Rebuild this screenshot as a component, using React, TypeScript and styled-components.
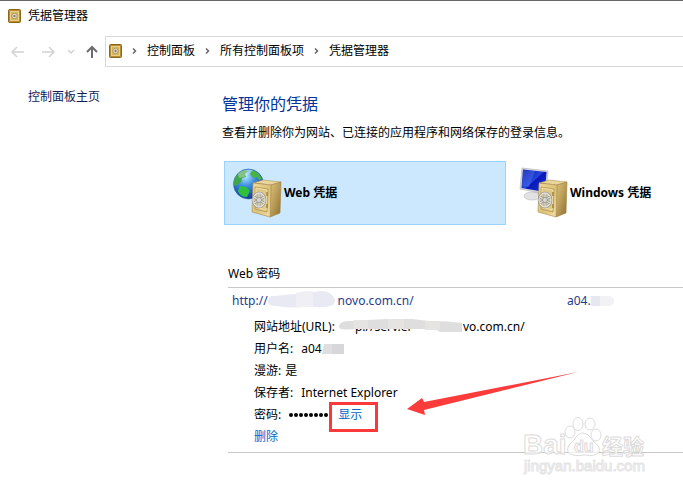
import React from "react";
import styled, { createGlobalStyle, css } from "styled-components";

const GlobalStyle = createGlobalStyle`
  * { box-sizing: border-box; }
  body {
    margin: 0;
    background: #fff;
    color: #000;
    font: 12px/20px "Noto Sans", "Open Sans", "Noto Sans CJK SC", sans-serif;
  }
  button { font: inherit; padding: 0; border: 0; background: none; cursor: pointer; }
`;

const Window = styled.div`
  position: relative;
  min-height: 100vh;
  overflow: hidden;
  border-top: 1px solid #6b6668;
  white-space: nowrap;
`;

const TitleBar = styled.header`
  display: flex;
  align-items: center;
  gap: 7px;
  height: 29px;
  padding-left: 8px;
`;

const WindowTitle = styled.span``;

const NavBar = styled.nav`
  display: flex;
  align-items: center;
  margin-top: 6px;
`;

const NavButtons = styled.div`
  display: grid;
  grid-template-columns: 36px 24px 22px 20px;
  justify-items: center;
  flex: none;
  padding-right: 3px;
`;

const NavButton = styled.button<{ $active?: boolean }>`
  display: flex;
  align-items: center;
  justify-content: center;
  height: 20px;
  color: ${(p) => (p.$active ? "#6c6c6c" : "#d2d2d2")};
`;

const AddressBar = styled.div`
  display: flex;
  align-items: center;
  flex: 1;
  height: 31px;
  padding: 0 0 2px 3px;
  border: 1px solid #d9d9d9;
  border-right: 0;
`;

const Crumb = styled.a`
  color: #000;
  text-decoration: none;
`;

const Separator = styled.span`
  display: flex;
  justify-content: center;
  width: 25px;
`;

const Body = styled.div`
  display: grid;
  grid-template-columns: 222px minmax(0, 1fr);
`;

const Sidebar = styled.aside`
  padding: 20px 0 0 28px;
`;

const HomeLink = styled.a`
  color: #151c55;
  text-decoration: none;
`;

const Main = styled.main`
  padding-top: 25px;
`;

const Heading = styled.h1`
  margin: 0;
  color: #003399;
  font-size: 16px;
  font-weight: 400;
  line-height: 24px;
`;

const Description = styled.p`
  margin: 7px 0 0;
`;

const Vaults = styled.div`
  display: flex;
  gap: 4px;
  margin: 18px 0 0 2px;
`;

const Vault = styled.button<{ $selected?: boolean }>`
  display: flex;
  align-items: center;
  gap: 2px;
  height: 64px;
  padding-left: 8px;
  color: #000;
  font-weight: 700;
  ${(p) =>
    p.$selected
      ? css`
          flex: 0 1 282px;
          border: 1px solid #99d1ff;
          background: #cce8ff;
        `
      : css`
          flex: 1;
          border: 1px solid transparent;
        `}
`;

const Section = styled.section`
  margin: 39px 0 0 6px;
  padding-bottom: 4px;
  border-bottom: 1px solid #c8c8c8;
`;

const SectionTitle = styled.h2`
  margin: 0;
  padding-bottom: 3px;
  border-bottom: 1px solid #c8c8c8;
  font-size: 12px;
  font-weight: 400;
  line-height: 20px;
`;

const RecordHeader = styled.div`
  display: grid;
  grid-template-columns: 335px 1fr;
  align-items: center;
  height: 26px;
  padding-left: 4px;
  color: #1f3c8c;
`;

const Details = styled.dl`
  margin: 2px 0 0 26px;
`;

const Detail = styled.div<{ $gap?: number }>`
  display: flex;
  align-items: center;
  gap: ${(p) => p.$gap ?? 8}px;
  height: 22px;
`;

const Label = styled.dt``;

const Value = styled.dd`
  display: flex;
  align-items: center;
  margin: 0;
`;

const Redacted = styled.span<{ $width: number }>`
  position: relative;
  display: inline-block;
  width: ${(p) => p.$width}px;
  height: 20px;
  padding-left: 16px;
  vertical-align: top;
`;

const Smudge = styled.svg`
  position: absolute;
  left: 0;
  top: 0;
  overflow: visible;
`;

const Dots = styled.span`
  display: flex;
  gap: 1px;
  margin-right: 10px;
`;

const Dot = styled.i`
  width: 4px;
  height: 4px;
  border-radius: 50%;
  background: #000;
`;

const Action = styled.button<{ $marked?: boolean }>`
  position: relative;
  color: #0066cc;
  ${(p) =>
    p.$marked &&
    css`
      &::after {
        content: "";
        position: absolute;
        inset: -3px -16px -7px -9px;
        border: 3px solid #fa3a3a;
      }
    `}
`;

const Arrow = styled.svg`
  position: absolute;
  left: 407px;
  top: 369px;
`;

const Watermark = styled.svg`
  position: absolute;
  left: 520px;
  top: 410px;
`;

function SafeIcon() {
  return (
    <svg width="13" height="14" viewBox="0 0 13 14" aria-hidden="true">
      <rect x=".5" y=".5" width="12" height="13" rx="1" fill="#b78d31" stroke="#8b671d" />
      <rect x="2.5" y="2.5" width="8" height="9" fill="#d6b562" stroke="#e8cf89" />
      <circle cx="6.5" cy="7" r="2.700" fill="#eee4c5" stroke="#a08a50" strokeWidth=".8" />
      <circle cx="6.5" cy="7" r="1.2" fill="#85806f" />
    </svg>
  );
}

function Chevron() {
  return (
    <Separator>
      <svg width="5" height="8" viewBox="0 0 5 8" fill="none" stroke="#666" strokeWidth="1.5" aria-hidden="true">
        <path d="m1 1.5 2.5 2.5L1 6.5" />
      </svg>
    </Separator>
  );
}

function NavArrow({ d, width = 14, heavy }: { d: string; width?: number; heavy?: boolean }) {
  return (
    <svg width={width} height="14" viewBox={`0 0 ${width} 14`} fill="none" stroke="currentColor" strokeWidth={heavy ? 2 : 1.5} aria-hidden="true">
      <path d={d} />
    </svg>
  );
}

function VaultIcon({ kind }: { kind: "web" | "windows" }) {
  return (
    <svg width="49" height="52" viewBox="0 0 49 52" aria-hidden="true">
      <defs>
        <radialGradient id="ocean" cx=".4" cy=".25" r=".8">
          <stop stopColor="#b5e8ff" />
          <stop offset=".4" stopColor="#3c8ee0" />
          <stop offset="1" stopColor="#0b2f8f" />
        </radialGradient>
        <linearGradient id="screen" x2="1" y2="1">
          <stop stopColor="#0717aa" />
          <stop offset=".48" stopColor="#2444dc" />
          <stop offset=".52" stopColor="#0a18bb" />
          <stop offset="1" stopColor="#1636d8" />
        </linearGradient>
        <linearGradient id="door" x2="1" y2="1">
          <stop stopColor="#efdb9c" />
          <stop offset=".55" stopColor="#dcc077" />
          <stop offset="1" stopColor="#f2e2a8" />
        </linearGradient>
        <linearGradient id="side" x2="1" y2="1">
          <stop stopColor="#dfc57c" />
          <stop offset="1" stopColor="#8f7030" />
        </linearGradient>
      </defs>
      {kind === "web" ? (
        <g>
          <circle cx="15.500" cy="17" r="15" fill="url(#ocean)" stroke="#2c67a6" strokeWidth=".6" />
          <path d="M2 11Q6 4 12 3l3 1-3 3 1 3-4 1-1 4-4 3-3 1Q0 15 2 11Z" fill="#3fa545" />
          <path d="m19 3 6 3 4 6-3 1-2-3-4 1-3-4Z" fill="#48b441" />
          <path d="m7 19 6 1 4 4-3 6Q7 30 5 24Z" fill="#2fc13b" />
          <path d="M5 7Q10 2 20 3q-5 7-14 8Z" fill="#fff" opacity=".35" />
        </g>
      ) : (
        <g>
          <path d="m13 25 10-1 3 6-7 2Z" fill="#c8cace" />
          <ellipse cx="13" cy="29" rx="8" ry="4" fill="#e2e2e5" stroke="#b7b8bc" strokeWidth=".6" />
          <path d="m3 1 26 3-2 23L1 22Z" fill="#d5d5dc" stroke="#babac0" strokeWidth=".7" />
          <path d="m4 2.500 23.500 2.500-1.500 20L2.500 21Z" fill="url(#screen)" />
          <path d="m4 3 12 1-6 16-7-1Z" fill="#6b8ff0" opacity=".3" />
        </g>
      )}
      <path d="m20 16 10-3 18 2-10 3Z" fill="#ead69b" stroke="#a68748" strokeWidth=".5" />
      <path d="m38 18 10-3-1 31-10 4Z" fill="url(#side)" stroke="#a08040" strokeWidth=".6" />
      <path d="m20 16 18 2-1 32-18-5Z" fill="url(#door)" stroke="#a9894a" strokeWidth=".6" />
      <path d="m22 20 13 2-1 23-12-3Z" fill="#dfc784" stroke="#ae8f4d" strokeWidth=".7" />
      <path d="m23 21 11 2-1 20-10-3Z" fill="none" stroke="#f5e6b5" strokeWidth=".7" />
      <path d="M34 25v4m0 8v4" stroke="#9e8142" strokeWidth="1.500" />
      <ellipse cx="26" cy="33" rx="6" ry="7" fill="none" stroke="#91928c" strokeWidth="2.500" />
      <ellipse cx="26" cy="33" rx="6" ry="7" fill="#d0c39b" stroke="#e0e0dc" strokeWidth="1.300" />
      <path d="M26 27v12m-5-9 10 6m-10 0 10-6" stroke="#91928c" strokeWidth="2.500" />
      <path d="M26 27v12m-5-9 10 6m-10 0 10-6" stroke="#e5e5df" strokeWidth="1.300" />
      <circle cx="26" cy="33" r="2.500" fill="#d8d8d4" stroke="#8a8b84" strokeWidth=".7" />
    </svg>
  );
}

export default function App() {
  return (
    <>
      <GlobalStyle />
      <Window>
        <TitleBar>
          <SafeIcon />
          <WindowTitle>凭据管理器</WindowTitle>
        </TitleBar>
        <NavBar aria-label="导航">
          <NavButtons>
            <NavButton aria-label="后退"><NavArrow d="M13 7H1m5-5L1 7l5 5" /></NavButton>
            <NavButton aria-label="前进"><NavArrow d="M1 7h12M8 2l5 5-5 5" /></NavButton>
            <NavButton aria-label="历史记录"><NavArrow width={8} d="m1 5 3 3 3-3" /></NavButton>
            <NavButton $active aria-label="向上"><NavArrow heavy d="M7 13V2M2 7l5-5 5 5" /></NavButton>
          </NavButtons>
          <AddressBar>
            <SafeIcon />
            <Chevron />
            <Crumb href="#panel">控制面板</Crumb>
            <Chevron />
            <Crumb href="#items">所有控制面板项</Crumb>
            <Chevron />
            <Crumb href="#manager">凭据管理器</Crumb>
          </AddressBar>
        </NavBar>
        <Body>
          <Sidebar>
            <HomeLink href="#home">控制面板主页</HomeLink>
          </Sidebar>
          <Main>
            <Heading>管理你的凭据</Heading>
            <Description>查看并删除你为网站、已连接的应用程序和网络保存的登录信息。</Description>
            <Vaults>
              <Vault $selected aria-pressed="true"><VaultIcon kind="web" />Web 凭据</Vault>
              <Vault aria-pressed="false"><VaultIcon kind="windows" />Windows 凭据</Vault>
            </Vaults>
            <Section>
              <SectionTitle>Web 密码</SectionTitle>
              <RecordHeader>
                <span>
                  http://
                  <Redacted $width={70}>
                    <Smudge width="70" height="20" aria-hidden="true">
                      <path d="M0 10q1-6 7-5 8-1 20-2 8-4 19-2 13-3 19 4 4 4 0 9-11 4-23 1-18 3-33 0-10 0-9-5Z" fill="#e8e9f3" />
                      <path d="M28 2q10-3 17 0v14H28Z" fill="#efeff5" />
                    </Smudge>
                  </Redacted>
                  novo.com.cn/
                </span>
                <span>
                  a04.
                  <Redacted $width={26}>
                    <Smudge width="26" height="20" aria-hidden="true">
                      <path d="M0 5h17q6 1 6 5t-6 5H0Z" fill="#e7e7f1" />
                      <path d="M9 5h8q6 1 6 5t-6 5H9Z" fill="#f1f1f6" />
                    </Smudge>
                  </Redacted>
                </span>
              </RecordHeader>
              <Details>
                <Detail $gap={4}>
                  <Label>网站地址(URL):</Label>
                  <Value>
                    <Redacted $width={124}>
                      p://serv.er
                      <Smudge width="124" height="20" aria-hidden="true">
                        <path d="M0 9q1-5 10-5l38-2h25l17 2q20 0 33 2v9h-22l-5-3H14q-15 2-14-3Z" fill="#dedede" />
                        <path d="M15 3h14v9H15Zm34-1h16v10H49Zm37 2h15v9H86Z" fill="#e6e3e3" />
                      </Smudge>
                    </Redacted>
                    vo.com.cn/
                  </Value>
                </Detail>
                <Detail>
                  <Label>用户名:</Label>
                  <Value>
                    a04
                    <Redacted $width={22}>
                      <Smudge width="22" height="20" aria-hidden="true">
                        <path d="M2 5h20v10H0Z" fill="#dedede" />
                        <path d="M10 5h12v10H10Z" fill="#d7d7d9" />
                      </Smudge>
                    </Redacted>
                  </Value>
                </Detail>
                <Detail $gap={4}><Label>漫游:</Label><Value>是</Value></Detail>
                <Detail><Label>保存者:</Label><Value>Internet Explorer</Value></Detail>
                <Detail>
                  <Label>密码:</Label>
                  <Value>
                    <Dots role="img" aria-label="已隐藏的密码">
                      {Array.from({ length: 8 }, (_, i) => <Dot key={i} />)}
                    </Dots>
                    <Action $marked>显示</Action>
                  </Value>
                </Detail>
                <Detail as="div"><Action>删除</Action></Detail>
              </Details>
            </Section>
          </Main>
        </Body>
        <Arrow width="174" height="46" viewBox="0 0 174 46" aria-hidden="true">
          <path d="m0 39 15-11 2 4L171 2 17 40l1 5Z" fill="#fc3b3b" />
        </Arrow>
        <Watermark width="130" height="68" viewBox="0 0 130 68" role="img" aria-label="Baidu 经验 jingyan.baidu.com">
          <g fill="#fff" fillOpacity=".7" stroke="#dcdcdc" strokeWidth="1" strokeLinejoin="round" fontFamily='"Liberation Sans", "Noto Sans CJK SC", sans-serif'>
            <ellipse cx="50" cy="21" rx="5" ry="6" />
            <ellipse cx="58" cy="13" rx="5" ry="6.500" />
            <ellipse cx="70" cy="13" rx="5" ry="6" />
            <ellipse cx="76" cy="24" rx="5" ry="6" />
            <path d="M63 22q5 0 10 8 8 6 6 11-3 5-15 3-12 2-16-3-2-6 6-12 4-7 9-7Z" />
            <text x="3" y="43" fontSize="28" fontWeight="700">Bai</text>
            <text x="54" y="41" fontSize="16" fontWeight="700">du</text>
            <text x="82" y="43" fontSize="21" fontWeight="700">经验</text>
            <text x="4" y="60" fontSize="15" stroke="#e4e4e4">jingyan.baidu.com</text>
          </g>
        </Watermark>
      </Window>
    </>
  );
}
